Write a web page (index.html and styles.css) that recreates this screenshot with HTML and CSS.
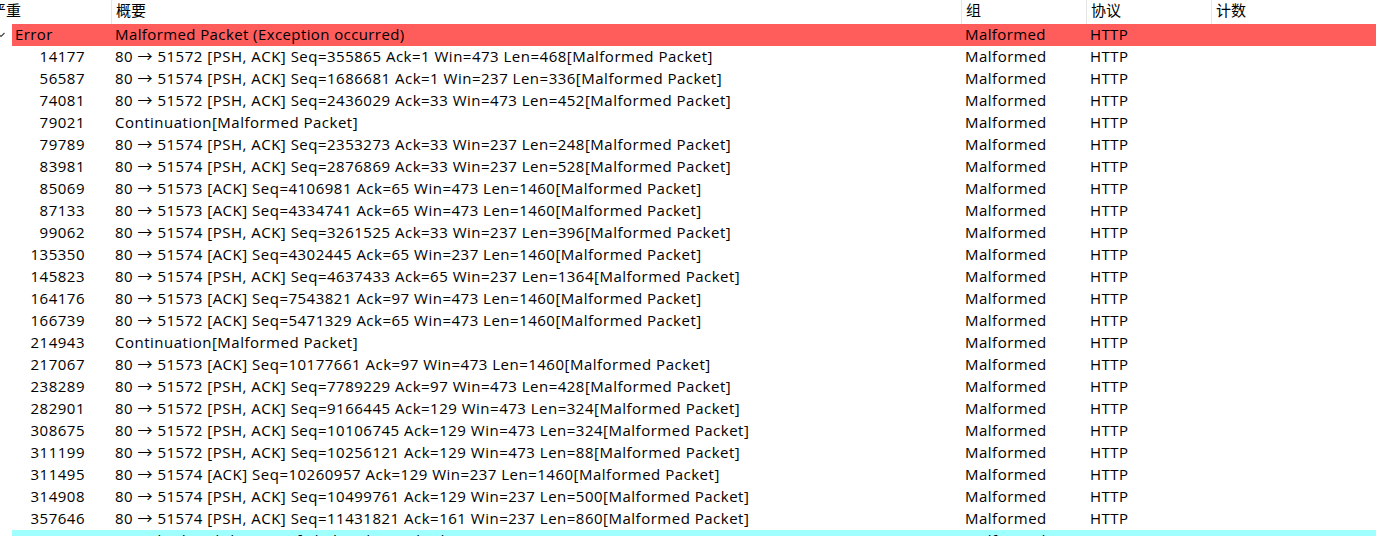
FILE: index.html
```html
<!DOCTYPE html>
<html lang="zh">
<head>
<meta charset="utf-8">
<title>Expert Info</title>
<link rel="stylesheet" href="styles.css">
</head>
<body>
<div class="table">
  <div class="header">
    <div class="hcell first"><span class="shift">严重</span></div>
    <div class="hcell">概要</div>
    <div class="hcell">组</div>
    <div class="hcell">协议</div>
    <div class="hcell">计数</div>
  </div>
  <div class="row parent error">
    <div class="cell sev"><svg class="chev" width="8" height="6" viewBox="0 0 8 6"><path d="M0.5 1 L4 4.5 L7.5 1" fill="none" stroke="#444" stroke-width="1.2"/></svg><span class="band">Error</span></div>
    <div class="cell">Malformed Packet (Exception occurred)</div>
    <div class="cell">Malformed</div>
    <div class="cell">HTTP</div>
    <div class="cell"></div>
  </div>
  <div class="row"><div class="cell num">14177</div><div class="cell">80 → 51572 [PSH, ACK] Seq=355865 Ack=1 Win=473 Len=468[Malformed Packet]</div><div class="cell">Malformed</div><div class="cell">HTTP</div><div class="cell"></div></div>
  <div class="row"><div class="cell num">56587</div><div class="cell">80 → 51574 [PSH, ACK] Seq=1686681 Ack=1 Win=237 Len=336[Malformed Packet]</div><div class="cell">Malformed</div><div class="cell">HTTP</div><div class="cell"></div></div>
  <div class="row"><div class="cell num">74081</div><div class="cell">80 → 51572 [PSH, ACK] Seq=2436029 Ack=33 Win=473 Len=452[Malformed Packet]</div><div class="cell">Malformed</div><div class="cell">HTTP</div><div class="cell"></div></div>
  <div class="row"><div class="cell num">79021</div><div class="cell">Continuation[Malformed Packet]</div><div class="cell">Malformed</div><div class="cell">HTTP</div><div class="cell"></div></div>
  <div class="row"><div class="cell num">79789</div><div class="cell">80 → 51574 [PSH, ACK] Seq=2353273 Ack=33 Win=237 Len=248[Malformed Packet]</div><div class="cell">Malformed</div><div class="cell">HTTP</div><div class="cell"></div></div>
  <div class="row"><div class="cell num">83981</div><div class="cell">80 → 51574 [PSH, ACK] Seq=2876869 Ack=33 Win=237 Len=528[Malformed Packet]</div><div class="cell">Malformed</div><div class="cell">HTTP</div><div class="cell"></div></div>
  <div class="row"><div class="cell num">85069</div><div class="cell">80 → 51573 [ACK] Seq=4106981 Ack=65 Win=473 Len=1460[Malformed Packet]</div><div class="cell">Malformed</div><div class="cell">HTTP</div><div class="cell"></div></div>
  <div class="row"><div class="cell num">87133</div><div class="cell">80 → 51573 [ACK] Seq=4334741 Ack=65 Win=473 Len=1460[Malformed Packet]</div><div class="cell">Malformed</div><div class="cell">HTTP</div><div class="cell"></div></div>
  <div class="row"><div class="cell num">99062</div><div class="cell">80 → 51574 [PSH, ACK] Seq=3261525 Ack=33 Win=237 Len=396[Malformed Packet]</div><div class="cell">Malformed</div><div class="cell">HTTP</div><div class="cell"></div></div>
  <div class="row"><div class="cell num">135350</div><div class="cell">80 → 51574 [ACK] Seq=4302445 Ack=65 Win=237 Len=1460[Malformed Packet]</div><div class="cell">Malformed</div><div class="cell">HTTP</div><div class="cell"></div></div>
  <div class="row"><div class="cell num">145823</div><div class="cell">80 → 51574 [PSH, ACK] Seq=4637433 Ack=65 Win=237 Len=1364[Malformed Packet]</div><div class="cell">Malformed</div><div class="cell">HTTP</div><div class="cell"></div></div>
  <div class="row"><div class="cell num">164176</div><div class="cell">80 → 51573 [ACK] Seq=7543821 Ack=97 Win=473 Len=1460[Malformed Packet]</div><div class="cell">Malformed</div><div class="cell">HTTP</div><div class="cell"></div></div>
  <div class="row"><div class="cell num">166739</div><div class="cell">80 → 51572 [ACK] Seq=5471329 Ack=65 Win=473 Len=1460[Malformed Packet]</div><div class="cell">Malformed</div><div class="cell">HTTP</div><div class="cell"></div></div>
  <div class="row"><div class="cell num">214943</div><div class="cell">Continuation[Malformed Packet]</div><div class="cell">Malformed</div><div class="cell">HTTP</div><div class="cell"></div></div>
  <div class="row"><div class="cell num">217067</div><div class="cell">80 → 51573 [ACK] Seq=10177661 Ack=97 Win=473 Len=1460[Malformed Packet]</div><div class="cell">Malformed</div><div class="cell">HTTP</div><div class="cell"></div></div>
  <div class="row"><div class="cell num">238289</div><div class="cell">80 → 51572 [PSH, ACK] Seq=7789229 Ack=97 Win=473 Len=428[Malformed Packet]</div><div class="cell">Malformed</div><div class="cell">HTTP</div><div class="cell"></div></div>
  <div class="row"><div class="cell num">282901</div><div class="cell">80 → 51572 [PSH, ACK] Seq=9166445 Ack=129 Win=473 Len=324[Malformed Packet]</div><div class="cell">Malformed</div><div class="cell">HTTP</div><div class="cell"></div></div>
  <div class="row"><div class="cell num">308675</div><div class="cell">80 → 51572 [PSH, ACK] Seq=10106745 Ack=129 Win=473 Len=324[Malformed Packet]</div><div class="cell">Malformed</div><div class="cell">HTTP</div><div class="cell"></div></div>
  <div class="row"><div class="cell num">311199</div><div class="cell">80 → 51572 [PSH, ACK] Seq=10256121 Ack=129 Win=473 Len=88[Malformed Packet]</div><div class="cell">Malformed</div><div class="cell">HTTP</div><div class="cell"></div></div>
  <div class="row"><div class="cell num">311495</div><div class="cell">80 → 51574 [ACK] Seq=10260957 Ack=129 Win=237 Len=1460[Malformed Packet]</div><div class="cell">Malformed</div><div class="cell">HTTP</div><div class="cell"></div></div>
  <div class="row"><div class="cell num">314908</div><div class="cell">80 → 51574 [PSH, ACK] Seq=10499761 Ack=129 Win=237 Len=500[Malformed Packet]</div><div class="cell">Malformed</div><div class="cell">HTTP</div><div class="cell"></div></div>
  <div class="row"><div class="cell num">357646</div><div class="cell">80 → 51574 [PSH, ACK] Seq=11431821 Ack=161 Win=237 Len=860[Malformed Packet]</div><div class="cell">Malformed</div><div class="cell">HTTP</div><div class="cell"></div></div>
  <div class="row parent note">
    <div class="cell sev"><svg class="chev" width="8" height="6" viewBox="0 0 8 6"><path d="M0.5 1 L4 4.5 L7.5 1" fill="none" stroke="#444" stroke-width="1.2"/></svg><span class="band">Note</span></div>
    <div class="cell">HTTP body subdissector failed to dissect body</div>
    <div class="cell">Malformed</div>
    <div class="cell">HTTP</div>
    <div class="cell"></div>
  </div>
</div>
</body>
</html>
```
FILE: styles.css
```css
html, body {
  margin: 0;
  padding: 0;
  background: #ffffff;
  overflow: hidden;
  height: 536px;
}
body {
  font-family: "Open Sans", "Noto Sans CJK SC", sans-serif;
  font-size: 15px;
  color: #000;
}
.table {
  width: 1376px;
}
.header, .row {
  display: grid;
  grid-template-columns: 112px 850px 125px 125px 1fr;
}
.header {
  height: 24px;
  background: #fff;
}
.hcell {
  font-family: "Noto Sans CJK SC", sans-serif;
  font-size: 15px;
  line-height: 20px;
  padding-left: 4px;
  border-right: 1px solid #e5e5e5;
  overflow: hidden;
  white-space: nowrap;
}
.hcell:last-child { border-right: none; }
.hcell.first { padding-left: 0; }
.shift { margin-left: -9px; }
.row {
  height: 22px;
  line-height: 20px;
  letter-spacing: 0.5px;
}
.row.parent {
  letter-spacing: 0.4px;
}
.cell {
  padding-left: 3px;
  white-space: nowrap;
  overflow: hidden;
}
.error .cell:not(.sev) { background: #ff5c5c; }
.note .cell:not(.sev) { background: #a0ffff; }
.cell.sev {
  display: flex;
  align-items: center;
  padding-left: 0;
}
.chev {
  margin-left: -3px;
  margin-right: 7px;
  flex: none;
}
.band {
  align-self: stretch;
  flex: 1;
  padding-left: 3px;
}
.error .band { background: #ff5c5c; }
.note .band { background: #a0ffff; }
.cell.num {
  text-align: right;
  padding-right: 27px;
  padding-left: 0;
}
```
